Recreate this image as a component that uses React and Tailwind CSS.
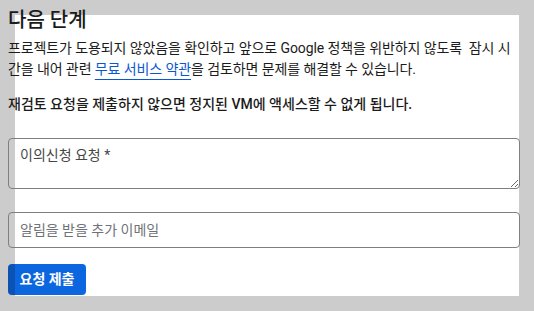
import React from "react";

const font = { fontFamily: "Roboto, 'Noto Sans CJK KR', sans-serif" };

export default function App() {
  return (
    <div className="w-[534px] h-[311px] bg-[#cccccc] overflow-hidden pt-[15px] pl-[15px]" style={font}>
      <div className="flow-root w-[504px] h-[281px] bg-white">
        <div className="-ml-[7px] -mt-[7px] w-[512px] text-[#1b1b1b]">
          <h2 className="text-[20px] leading-[24px] font-medium">다음 단계</h2>
          <p className="mt-[6px] text-[14px] leading-[21px] tracking-[-0.1px]">
            프로젝트가 도용되지 않았음을 확인하고 앞으로 Google 정책을 위반하지 않도록&nbsp; 잠시 시간을 내어 관련{" "}
            <a className="text-[#0b57d0] underline underline-offset-[5px] decoration-[1px]">무료 서비스 약관</a>을 검토하면 문제를 해결할 수 있습니다.
          </p>
          <p className="mt-[14px] text-[14px] leading-[21px] font-medium">
            재검토 요청을 제출하지 않으면 정지된 VM에 액세스할 수 없게 됩니다.
          </p>
          <textarea
            className="mt-[23px] block w-[512px] h-[51px] border border-[#7f7f7f] rounded-[4px] bg-transparent px-[11px] py-[6px] text-[14px] leading-[20px] placeholder:text-[#444746] outline-none"
            placeholder="이의신청 요청 *"
          />
          <input
            className="mt-[23px] block w-[512px] h-[36px] border border-[#7f7f7f] rounded-[4px] bg-transparent px-[11px] text-[14px] placeholder:text-[#6f7378] outline-none"
            placeholder="알림을 받을 추가 이메일"
          />
          <button className="mt-[16px] h-[31px] w-[78px] rounded-[4px] text-white text-[14px] font-semibold bg-[linear-gradient(to_right,#0a52b3_7px,#0b66e0_7px)]">
            요청 제출
          </button>
        </div>
      </div>
    </div>
  );
}
